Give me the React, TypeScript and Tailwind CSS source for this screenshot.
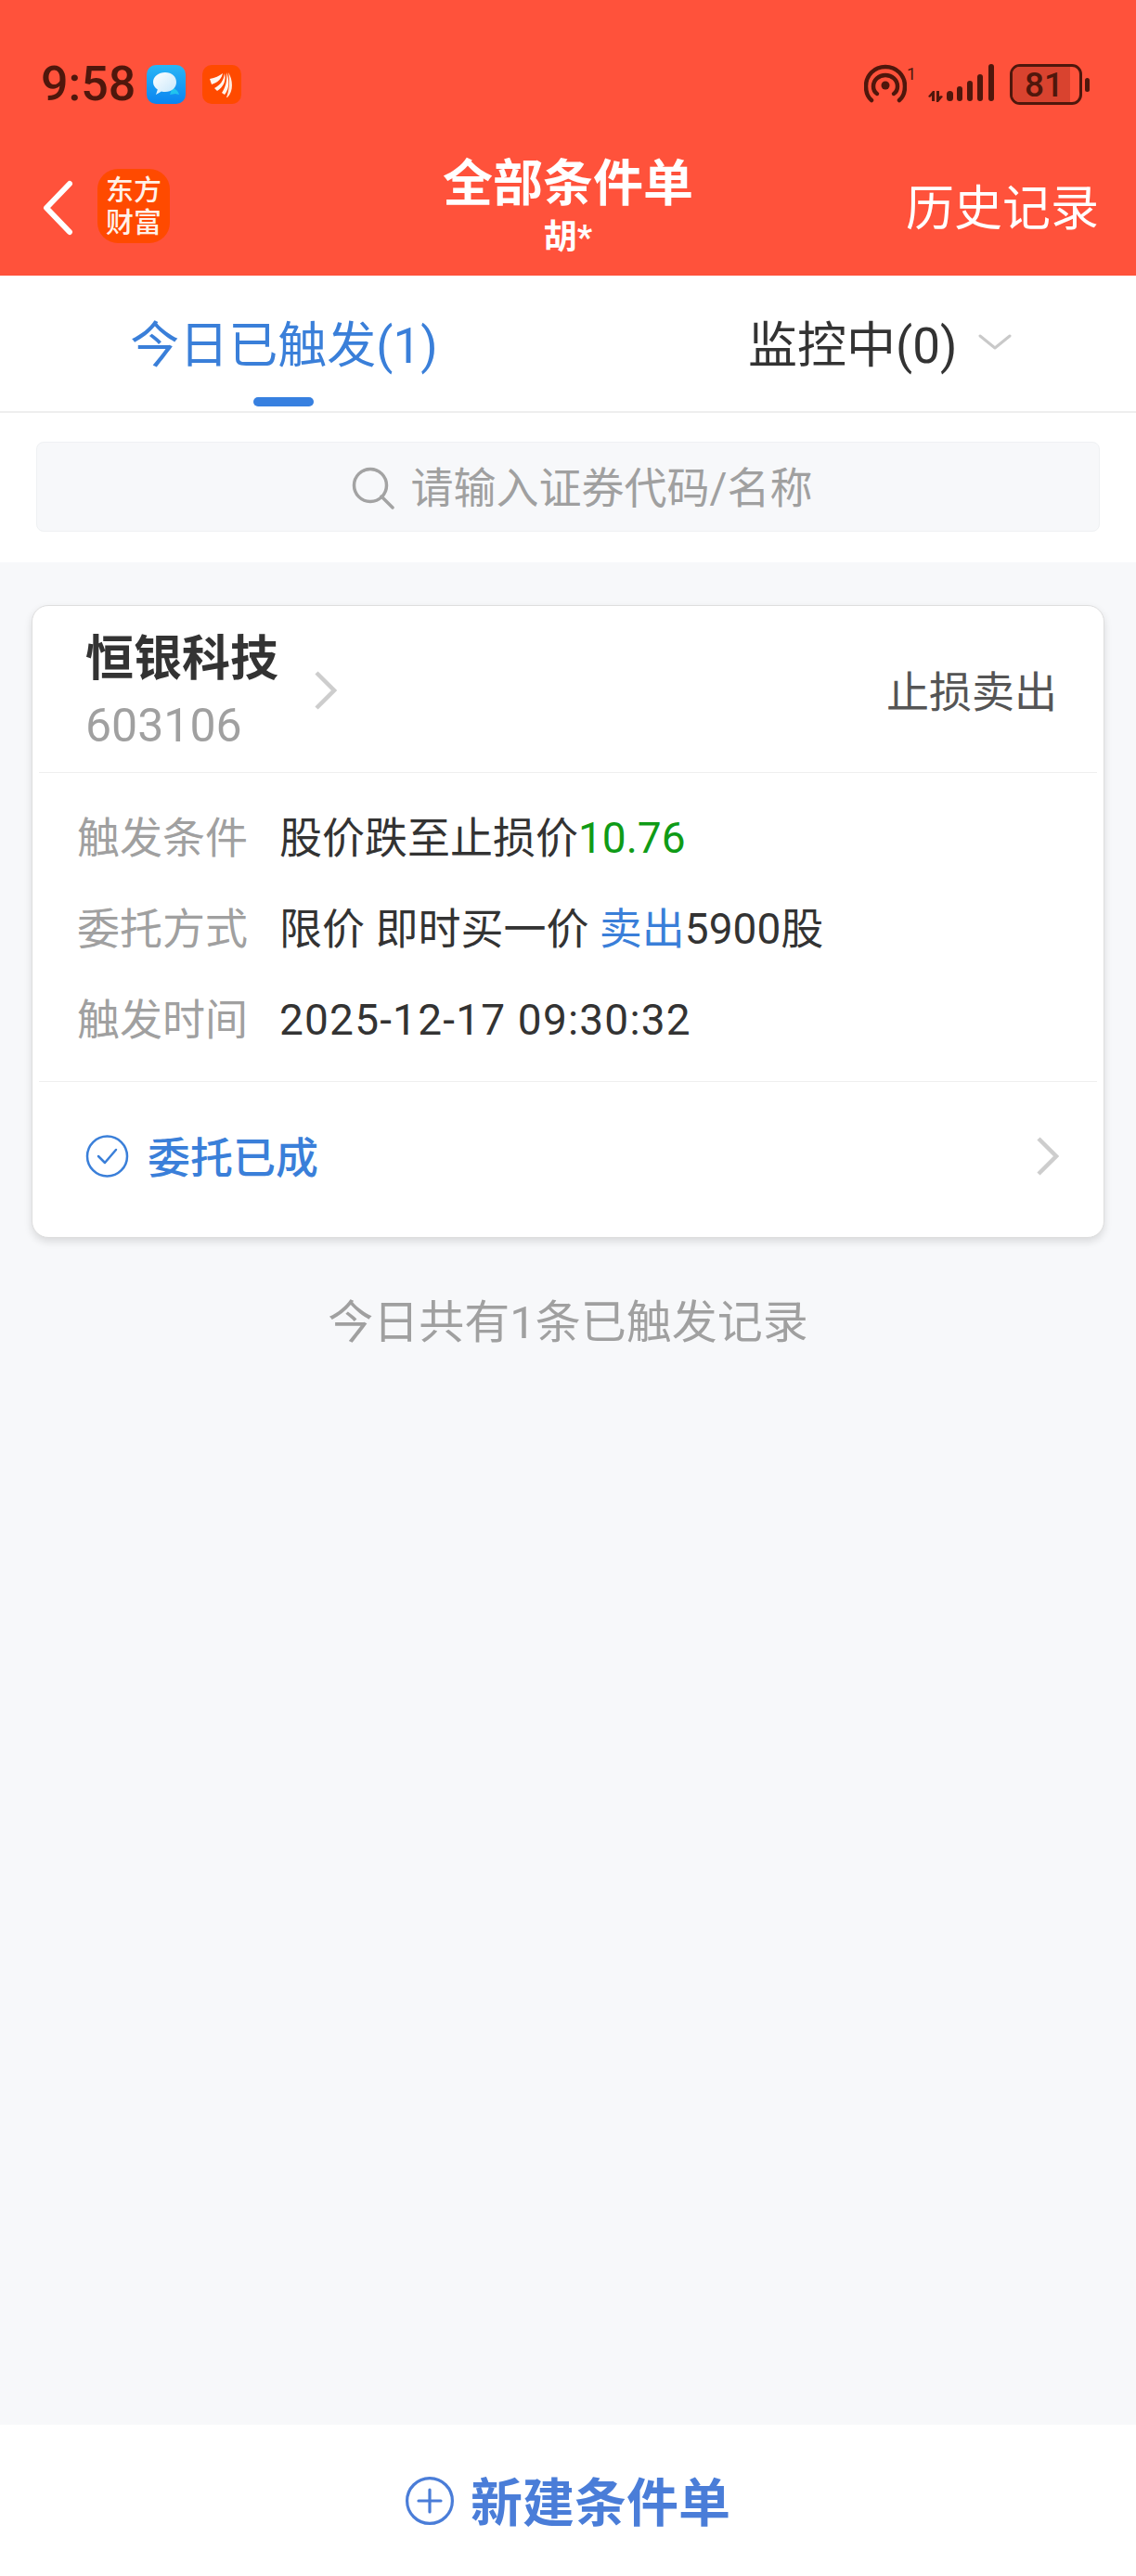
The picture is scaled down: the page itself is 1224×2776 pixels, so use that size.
function MessageIcon() {
  return (
    <svg width="42" height="42" viewBox="0 0 42 42">
      <defs>
        <linearGradient id="msgBg" x1="0" y1="0" x2="0" y2="1">
          <stop offset="0" stopColor="#29b6f6" />
          <stop offset="1" stopColor="#0a84f0" />
        </linearGradient>
        <linearGradient id="msgBubble" x1="0" y1="0" x2="1" y2="1">
          <stop offset="0" stopColor="#ffffff" />
          <stop offset="1" stopColor="#c5e6fa" />
        </linearGradient>
      </defs>
      <rect width="42" height="42" rx="10" fill="url(#msgBg)" />
      <path d="M32 27c3 3 3 5 3 5l-4-1-6 1 3-8z" fill="#21c4ee" />
      <path d="M20 8c7 0 12 4.500 12 10.500S27 29 20 29c-1.500 0-3-.2-4-.6L10 32l1.800-5.500C9 24.500 7 22 7 18.500 7 12.500 13 8 20 8z" fill="url(#msgBubble)" />
    </svg>
  )
}

function FeatherIcon() {
  return (
    <svg width="42" height="42" viewBox="0 0 42 42">
      <rect width="42" height="42" rx="10" fill="#ff4a00" />
      <path d="M8 15c6-1 10-3 14-6-1 5-5 10-12 12z" fill="#fff5ee" />
      <path d="M13 25c6-3 10-8 11-16 2 7-1 15-8 19z" fill="#fff5ee" />
      <path d="M21 30c4-6 6-13 5-22 3 7 4 17-2 24z" fill="#fff5ee" />
      <path d="M26 35c3-8 4-17 2-27 5 8 6 20-1 27z" fill="#ffe9dc" />
    </svg>
  )
}

function HotspotIcon() {
  return (
    <svg width="46" height="42" viewBox="0 0 46 42" fill="none" stroke="#4f170c" strokeLinecap="round">
      <path d="M8 39C3 35 2 30 2 24 2 12 11 3 23 3s21 9 21 21c0 6-1 11-6 15" strokeWidth="4.500" />
      <path d="M14 32c-3-2-4-5-4-8 0-7 6-12 13-12s13 5 13 12c0 3-1 6-4 8" strokeWidth="4.500" />
      <circle cx="23" cy="23" r="4.500" fill="#4f170c" stroke="none" />
    </svg>
  )
}

function SignalIcon() {
  return (
    <svg width="74" height="42" viewBox="0 0 74 42" fill="#4f170c">
      <path d="M1 35l5-6h2v11H5v-6l-2 2zM10 29h3v6l2-1 2 1-5 6h-2z" />
      <rect x="21" y="29" width="7" height="11" rx="3.500" />
      <rect x="32" y="24" width="6" height="16" rx="3" />
      <rect x="43" y="18" width="6" height="22" rx="3" />
      <rect x="54" y="11" width="6" height="29" rx="3" />
      <rect x="66" y="0" width="6" height="40" rx="3" />
    </svg>
  )
}

function Battery() {
  return (
    <div className="flex items-center gap-[3px]">
      <div className="relative h-[44px] w-[78px] overflow-hidden rounded-[11px] border-[3px] border-[#4f170c]">
        <div className="absolute inset-y-0 left-0 w-[62px] bg-[#d9432f]" />
        <span className="relative flex h-full items-center justify-center pr-[4px] text-[37px] font-medium leading-none text-[#4f170c]">
          81
        </span>
      </div>
      <div className="h-[15px] w-[5px] rounded-full bg-[#4f170c]" />
    </div>
  )
}

function StatusBar() {
  return (
    <div className="flex h-[160px] items-start justify-between pl-[44px] pr-[50px] pt-[69px]">
      <div className="flex items-center">
        <span className="w-[114px] text-[52px] font-medium leading-[44px] text-[#4f170c]">9:58</span>
        <MessageIcon />
        <div className="ml-[18px]">
          <FeatherIcon />
        </div>
      </div>
      <div className="flex items-start">
        <HotspotIcon />
        <span className="w-[22px] pt-[2px] text-[18px] leading-[18px] text-[#4f170c]">1</span>
        <SignalIcon />
        <div className="ml-[15px]">
          <Battery />
        </div>
      </div>
    </div>
  )
}

function NavBar() {
  return (
    <div className="grid h-[137px] grid-cols-[1fr_auto_1fr] text-white">
      <div className="flex items-start pl-[46px] pt-[34px]">
        <svg width="33" height="60" viewBox="0 0 33 60" fill="none" stroke="#ffffff" strokeWidth="6" strokeLinecap="round" strokeLinejoin="round">
          <path d="M29 4L4 30l25 26" />
        </svg>
        <div className="ml-[26px] mt-[-12px] flex h-[80px] w-[78px] flex-col items-center justify-center rounded-[22px] bg-[#ff4a00] text-[30px] font-medium leading-[35px] text-[#fff1e8]">
          <span>东方</span>
          <span>财富</span>
        </div>
      </div>
      <div className="flex flex-col items-center pt-[5px]">
        <span className="text-[54px] font-bold leading-[68px]">全部条件单</span>
        <span className="mt-[1px] text-[36px] font-bold leading-[44px]">胡*</span>
      </div>
      <div className="flex justify-end pr-[40px] pt-[33px]">
        <span className="text-[52px] leading-[66px]">历史记录</span>
      </div>
    </div>
  )
}

function Tabs() {
  return (
    <div className="flex h-[148px] border-b-2 border-[#eeeeee] bg-white">
      <div className="relative w-[612px] pt-[45px] text-center">
        <span className="text-[53px] leading-[62px] text-[#3a7fd9]">今日已触发(1)</span>
        <div className="absolute bottom-[5px] left-[273px] h-[10px] w-[65px] rounded-full bg-[#3780e0]" />
      </div>
      <div className="flex flex-1 items-start pl-[194px] pt-[45px]">
        <span className="text-[53px] leading-[62px] text-[#333333]">监控中(0)</span>
        <svg width="36" height="18" viewBox="0 0 36 18" fill="none" stroke="#c9c9c9" strokeWidth="3" strokeLinecap="round" strokeLinejoin="round" className="ml-[23px] mt-[18px]">
          <path d="M2 2l16 13L34 2" />
        </svg>
      </div>
    </div>
  )
}

function SearchBox() {
  return (
    <div className="bg-white px-[39px] pb-[33px] pt-[31px]">
      <div className="flex h-[97px] items-center justify-center gap-[18px] rounded-[8px] border border-[#eff1f3] bg-[#f7f8fa] pl-[30px] pt-[2px]">
        <svg width="46" height="46" viewBox="0 0 46 46" fill="none" stroke="#a3a3a3" strokeWidth="3.500" strokeLinecap="round">
          <circle cx="20" cy="20" r="17.500" />
          <path d="M32 32l12 12" />
        </svg>
        <span className="text-[46px] leading-[60px] text-[#a0a0a0]">请输入证券代码/名称</span>
      </div>
    </div>
  )
}

function InfoRow({ label, children }: { label: string; children: React.ReactNode }) {
  return (
    <div className="flex h-[98px] items-center text-[46px]">
      <span className="w-[218px] shrink-0 text-[#a0a0a0]">{label}</span>
      <span className="text-[#333333]">{children}</span>
    </div>
  )
}

function RowChevron({ className }: { className: string }) {
  return (
    <svg width="24" height="42" viewBox="0 0 24 42" fill="none" stroke="#cdcdcd" strokeWidth="4.500" strokeLinejoin="miter" className={className}>
      <path d="M2 2l19 19L2 40" />
    </svg>
  )
}

function OrderCard() {
  return (
    <div className="mx-[34px] mt-[46px] h-[682px] rounded-[18px] border border-[#dedede] bg-white shadow-[0_4px_8px_rgba(0,0,0,0.12)]">
      <div className="flex h-[179px] items-start justify-between pl-[57px] pr-[50px]">
        <div className="flex items-start">
          <div className="flex flex-col pt-[24px]">
            <span className="text-[52px] font-bold leading-[68px] text-[#333333]">恒银科技</span>
            <span className="mt-[9px] text-[50px] leading-[56px] text-[#a0a0a0]">603106</span>
          </div>
          <RowChevron className="ml-[39px] mt-[70px]" />
        </div>
        <span className="pt-[63px] text-[46px] leading-[60px] text-[#555555]">止损卖出</span>
      </div>
      <div className="mx-[7px] h-px bg-[#efefef]" />
      <div className="pb-[17px] pl-[48px] pt-[21px]">
        <InfoRow label="触发条件">
          股价跌至止损价<span className="text-[#0f9b16]">10.76</span>
        </InfoRow>
        <InfoRow label="委托方式">
          限价 即时买一价 <span className="text-[#3a7fd9]">卖出</span>5900股
        </InfoRow>
        <InfoRow label="触发时间">
          <span className="tracking-[1.2px]">2025-12-17 09:30:32</span>
        </InfoRow>
      </div>
      <div className="mx-[7px] h-px bg-[#efefef]" />
      <div className="flex h-[168px] items-center justify-between pb-[8px] pl-[57px] pr-[48px]">
        <div className="flex items-center gap-[20px]">
          <svg width="47" height="46" viewBox="0 0 47 46" fill="none" stroke="#3a7fd9" strokeWidth="2.500" strokeLinecap="round" strokeLinejoin="round">
            <circle cx="23.500" cy="23" r="21.500" />
            <path d="M14 23l7 7 12-14" />
          </svg>
          <span className="pt-[4px] text-[46px] font-medium leading-[60px] text-[#3a7fd9]">委托已成</span>
        </div>
        <RowChevron className="" />
      </div>
    </div>
  )
}

function BottomBar() {
  return (
    <div className="flex h-[163px] items-start justify-center gap-[18px] bg-white pt-[55px]">
      <svg width="52" height="54" viewBox="0 0 52 54" fill="none" stroke="#4a7dd8" strokeWidth="3.200" strokeLinecap="round">
        <circle cx="26" cy="27" r="24.400" />
        <path d="M14 27h24M26 15v24" />
      </svg>
      <span className="pt-[3px] text-[56px] font-bold leading-[54px] text-[#4a7dd8]">新建条件单</span>
    </div>
  )
}

export default function App() {
  return (
    <div className="flex h-[2776px] w-[1224px] flex-col overflow-hidden bg-[#f7f8fa] font-[family-name:Roboto,'Noto_Sans_CJK_SC',sans-serif]">
      <div className="bg-[#ff523b]">
        <StatusBar />
        <NavBar />
      </div>
      <Tabs />
      <SearchBox />
      <div className="flex-1">
        <OrderCard />
        <p className="mt-[61px] text-center text-[49px] leading-[62px] text-[#a0a0a0]">今日共有1条已触发记录</p>
      </div>
      <BottomBar />
    </div>
  )
}
